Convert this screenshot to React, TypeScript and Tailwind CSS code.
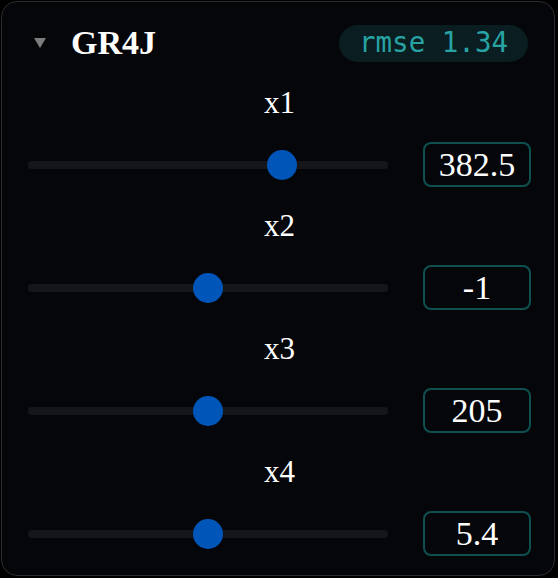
import React from "react";

const params = [
  { name: "x1", value: "382.5", pos: 0.724 },
  { name: "x2", value: "-1", pos: 0.5 },
  { name: "x3", value: "205", pos: 0.5 },
  { name: "x4", value: "5.4", pos: 0.5 },
];

function Slider({ pos }: { pos: number }) {
  return (
    <div className="relative flex-1 h-[30px] flex items-center">
      <div className="w-full h-2 rounded-full bg-[#15161a]" />
      <div
        className="absolute top-0 w-[30px] h-[30px] rounded-full bg-[#0055b9]"
        style={{ left: `${pos * 330}px` }}
      />
    </div>
  );
}

export default function App() {
  return (
    <div className="w-[558px] h-[578px] bg-black p-px">
      <div
        className="w-[554px] h-[575px] rounded-2xl border border-[#2c2c30] bg-[#05060a] pt-[22px] pl-[26px] pr-[23px] text-white"
        style={{ fontFamily: '"Liberation Serif", "Times New Roman", serif' }}
      >
        <header className="flex items-center justify-between h-[38px] pr-[3px]">
          <div className="flex items-center">
            <svg width="12" height="11" viewBox="0 0 12 11" className="ml-[6px]">
              <polygon points="0,0 12,0 6,10" fill="#7c7c7e" />
            </svg>
            <h1 className="ml-[25px] text-[34px] font-bold leading-none">GR4J</h1>
          </div>
          <span
            className="h-[37px] px-5 flex items-center rounded-full bg-[#0a1d20] text-[#27a3a3] text-[27.5px]"
            style={{ fontFamily: '"DejaVu Sans Mono", monospace' }}
          >
            rmse 1.34
          </span>
        </header>

        <div className="mt-[20px] flex flex-col gap-[18px]">
          {params.map((p) => (
            <div key={p.name}>
              <div className="h-[40px] flex items-center justify-center text-[31px] leading-none">
                {p.name}
              </div>
              <div className="mt-[20px] flex items-center gap-[35px]">
                <Slider pos={p.pos} />
                <div className="w-[108px] h-[45px] rounded-lg border-2 border-[#0e5050] flex items-center justify-center text-[34px] leading-none">
                  {p.value}
                </div>
              </div>
            </div>
          ))}
        </div>
      </div>
    </div>
  );
}
